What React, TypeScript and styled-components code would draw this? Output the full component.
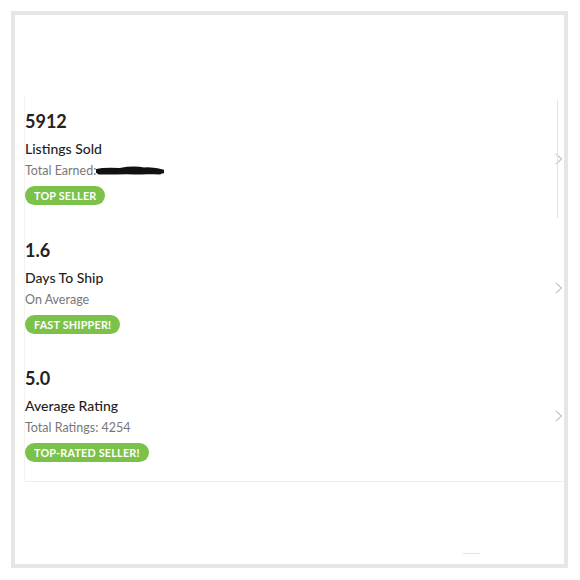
import React from "react";
import styled, { createGlobalStyle } from "styled-components";

const Global = createGlobalStyle`
  html, body { margin: 0; padding: 0; background: #fff; }
  body { font-family: Lato, "Open Sans", Arial, sans-serif; }
`;

const Page = styled.div`
  width: 580px;
  height: 580px;
  padding: 11px 12px 12px 11px;
  box-sizing: border-box;
  background: #fff;
`;

const Frame = styled.div`
  width: 557px;
  height: 557px;
  box-sizing: border-box;
  border: 4px solid #e6e6e6;
  background: #fff;
  padding: 80px 0 0 9px;
  position: relative;
`;

const List = styled.div`
  display: flex;
  flex-direction: column;
  border-left: 1px solid #f3f3f3;
  border-bottom: 1px solid #eeeeee;
  position: relative;
`;

const ScrollTrack = styled.div`
  position: absolute;
  right: 6px;
  top: 5px;
  width: 1px;
  height: 118px;
  background: #e4e4e4;
`;

const Row = styled.div`
  height: 128.5px;
  box-sizing: border-box;
  display: flex;
  align-items: flex-start;
  justify-content: space-between;
  padding: 15px 1px 0 0;
`;

const Info = styled.div`
  display: flex;
  flex-direction: column;
  align-items: flex-start;
`;

const Value = styled.div`
  font-size: 18px;
  line-height: 22px;
  font-weight: 700;
  color: #222;
`;

const Label = styled.div`
  margin-top: 8px;
  font-size: 14px;
  line-height: 18px;
  font-weight: 500;
  color: #1e1e1e;
`;

const Sub = styled.div`
  margin-top: 4px;
  font-size: 12.5px;
  line-height: 17px;
  color: #777;
  display: flex;
  align-items: center;
`;

const Badge = styled.div`
  margin-top: 7px;
  height: 19px;
  padding: 0 9px;
  border-radius: 10px;
  background: #7cc24a;
  color: #fff;
  font-size: 10.8px;
  font-weight: 700;
  letter-spacing: 0.2px;
  line-height: 19px;
  white-space: nowrap;
`;

const ChevronWrap = styled.div`
  align-self: center;
  margin-top: -15px;
  display: flex;
`;

const Chevron = () => (
  <ChevronWrap>
    <svg width="8" height="12" viewBox="0 0 8 12">
      <polyline points="1,1 6.5,6 1,11" fill="none" stroke="#c4c4c4" strokeWidth="1.2" />
    </svg>
  </ChevronWrap>
);

const Scribble = () => (
  <svg width="68" height="10" viewBox="0 0 68 10" style={{ marginLeft: 0 }}>
    <path
      d="M1 5 C8 3 16 3.5 24 4 C32 2.5 40 2 48 3.5 C54 2.5 60 4 67 5.5 M3 6.5 C14 7 26 6 38 6.5 C48 7 56 5.5 64 6.5"
      fill="none"
      stroke="#111"
      strokeWidth="4"
      strokeLinecap="round"
    />
  </svg>
);

const BottomDash = styled.div`
  position: absolute;
  left: 448px;
  bottom: 10px;
  width: 17px;
  height: 1px;
  background: #e4e4e4;
`;

const rows = [
  { value: "5912", label: "Listings Sold", sub: "Total Earned:", redacted: true, badge: "TOP SELLER" },
  { value: "1.6", label: "Days To Ship", sub: "On Average", redacted: false, badge: "FAST SHIPPER!" },
  { value: "5.0", label: "Average Rating", sub: "Total Ratings: 4254", redacted: false, badge: "TOP-RATED SELLER!" },
];

export default function App() {
  return (
    <>
      <Global />
      <Page>
        <Frame>
          <List>
            <ScrollTrack />
            {rows.map((r) => (
              <Row key={r.value}>
                <Info>
                  <Value>{r.value}</Value>
                  <Label>{r.label}</Label>
                  <Sub>
                    {r.sub}
                    {r.redacted && <Scribble />}
                  </Sub>
                  <Badge>{r.badge}</Badge>
                </Info>
                <Chevron />
              </Row>
            ))}
          </List>
          <BottomDash />
        </Frame>
      </Page>
    </>
  );
}
